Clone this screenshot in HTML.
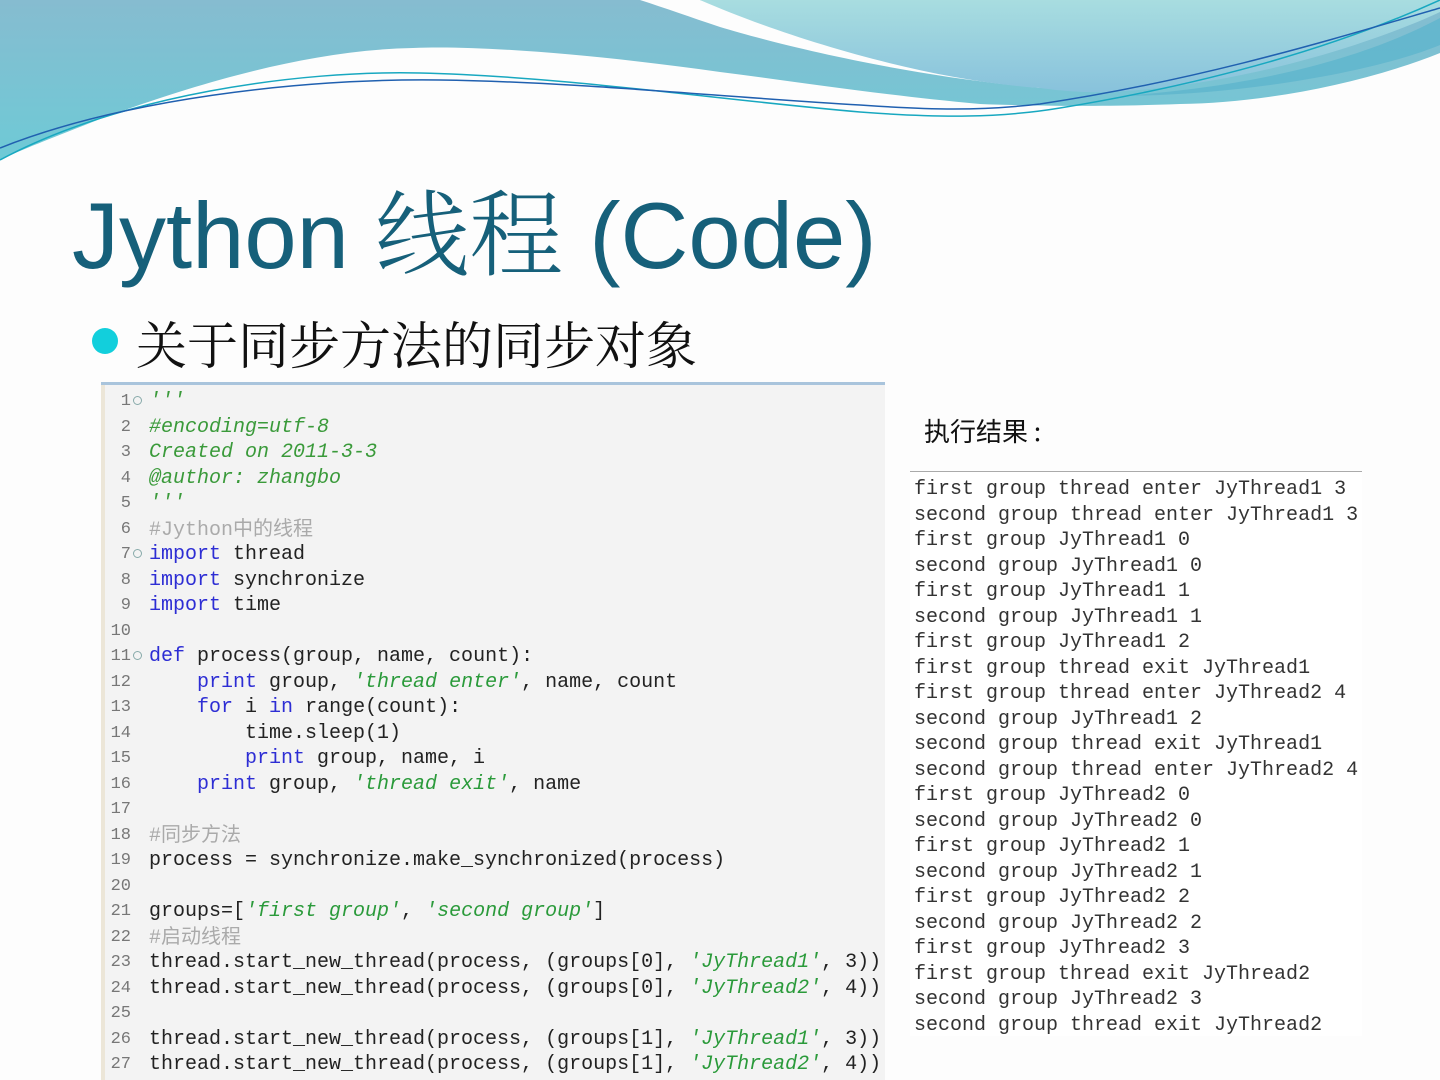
<!DOCTYPE html>
<html><head><meta charset="utf-8"><style>
html,body{margin:0;width:1440px;height:1080px;overflow:hidden}
body{background:#fdfdfd;position:relative;font-family:"Liberation Sans","Noto Sans CJK SC",sans-serif}
.abs{position:absolute}
#title{left:72px;top:168px;font-size:94px;color:#16607a;white-space:nowrap;line-height:120px}
#title .cj{font-family:"Noto Serif CJK SC","Noto Sans CJK SC",serif;font-weight:300}
#bul{left:92px;top:328px;width:26px;height:26px;border-radius:50%;background:#12cfdc}
#sub{left:136px;top:310px;font-size:51px;font-family:"Noto Serif CJK SC",serif;color:#111;line-height:64px;white-space:nowrap}
#code{left:101px;top:382px;width:784px;height:698px;background:#f3f3f3;border-top:3px solid #a9c4dc;box-sizing:border-box}
#gut{left:101px;top:385px;width:4px;height:695px;background:#ece6d8}
.ln{position:absolute;font-family:"Liberation Mono",monospace;font-size:20px;white-space:normal}
.ln div{height:25.5px;line-height:25.5px;overflow:visible;white-space:pre}
#nums{left:101px;top:389px;width:30px;text-align:right;color:#777;font-size:17px}
#src{left:149px;top:389px;color:#222}
.k{color:#2d2dd4}.s{color:#2a9a3a;font-style:italic}.c{color:#aaa}.g{color:#3a9a3a;font-style:italic}
.cjk{font-family:"Noto Sans CJK SC",sans-serif;font-size:20px;line-height:20px}
.fold{position:absolute;left:133px;width:9px;height:9px;border:1px solid #8aa;border-radius:50%;box-sizing:border-box}
#res{left:924px;top:412px;font-size:26px;font-family:"Noto Sans CJK SC",sans-serif;color:#111}
#out{left:910px;top:471px;width:452px;height:564px;background:#fff;border-top:1.5px solid #aaa}
#outt{left:914px;top:477px;color:#333}
</style></head><body>
<svg class="abs" style="left:0;top:0" width="1440" height="180" viewBox="0 0 1440 180">
<defs>
<linearGradient id="g1" x1="0" y1="0" x2="0" y2="1"><stop offset="0" stop-color="#86bcd0"/><stop offset="1" stop-color="#6ecad6"/></linearGradient>
<linearGradient id="g2" x1="0" y1="0" x2="0" y2="1"><stop offset="0" stop-color="#a8dde0"/><stop offset="1" stop-color="#88c2dc"/></linearGradient>
</defs>
<path d="M0 0 H1440 V53 C1360 85 1260 103 1180 104 C1100 107 1030 106 980 104 C880 95 800 82 720 72 C600 55 480 45 413 48 C300 50 180 90 105 117 C60 135 20 150 0 160 Z" fill="url(#g1)"/>
<path d="M640 0 H700 C760 20 900 60 1041 88 C900 75 780 45 720 27 C690 17 665 8 640 0 Z" fill="#fdfdfd"/>
<path d="M700 0 C780 35 920 80 1041 88 C1060 91 1090 93 1110 92 C1250 85 1380 40 1440 12 V0 Z" fill="url(#g2)"/>
<path d="M1440 18 C1380 50 1280 85 1120 96 C1250 95 1380 70 1440 45 Z" fill="#5cb4cc" opacity=".75"/>
<path d="M0 160 C120 95 300 70 420 73 C560 76 720 100 860 112 C940 118 1000 118 1060 108 C1200 85 1330 50 1440 0" fill="none" stroke="#18a8c0" stroke-width="1.5"/>
<path d="M0 148 C120 100 300 78 440 80 C580 82 720 97 860 105 C930 110 980 111 1040 104 C1200 80 1330 40 1440 8" fill="none" stroke="#2060b0" stroke-width="1.5"/>
</svg>
<div id="title" class="abs">Jython <span class="cj">线程</span> (Code)</div>
<div id="bul" class="abs"></div>
<div id="sub" class="abs">关于同步方法的同步对象</div>
<div id="code" class="abs"></div>
<div id="gut" class="abs"></div>
<div class="fold" style="top:396px"></div>
<div class="fold" style="top:549px"></div>
<div class="fold" style="top:651px"></div>
<div id="nums" class="ln"><div>1</div><div>2</div><div>3</div><div>4</div><div>5</div><div>6</div><div>7</div><div>8</div><div>9</div><div>10</div><div>11</div><div>12</div><div>13</div><div>14</div><div>15</div><div>16</div><div>17</div><div>18</div><div>19</div><div>20</div><div>21</div><div>22</div><div>23</div><div>24</div><div>25</div><div>26</div><div>27</div></div>
<div id="src" class="ln"><div><span class="g">'''</span></div><div><span class="g">#encoding=utf-8</span></div><div><span class="g">Created on 2011-3-3</span></div><div><span class="g">@author: zhangbo</span></div><div><span class="g">'''</span></div><div><span class="c">#Jython<span class="cjk">中的线程</span></span></div><div><span class="k">import</span> thread</div><div><span class="k">import</span> synchronize</div><div><span class="k">import</span> time</div><div></div><div><span class="k">def</span> process(group, name, count):</div><div>    <span class="k">print</span> group, <span class="s">'thread enter'</span>, name, count</div><div>    <span class="k">for</span> i <span class="k">in</span> range(count):</div><div>        time.sleep(1)</div><div>        <span class="k">print</span> group, name, i</div><div>    <span class="k">print</span> group, <span class="s">'thread exit'</span>, name</div><div></div><div><span class="c">#<span class="cjk">同步方法</span></span></div><div>process = synchronize.make_synchronized(process)</div><div></div><div>groups=[<span class="s">'first group'</span>, <span class="s">'second group'</span>]</div><div><span class="c">#<span class="cjk">启动线程</span></span></div><div>thread.start_new_thread(process, (groups[0], <span class="s">'JyThread1'</span>, 3))</div><div>thread.start_new_thread(process, (groups[0], <span class="s">'JyThread2'</span>, 4))</div><div></div><div>thread.start_new_thread(process, (groups[1], <span class="s">'JyThread1'</span>, 3))</div><div>thread.start_new_thread(process, (groups[1], <span class="s">'JyThread2'</span>, 4))</div></div>
<div id="res" class="abs">执行结果 :</div>
<div id="out" class="abs"></div>
<div id="outt" class="ln"><div>first group thread enter JyThread1 3</div><div>second group thread enter JyThread1 3</div><div>first group JyThread1 0</div><div>second group JyThread1 0</div><div>first group JyThread1 1</div><div>second group JyThread1 1</div><div>first group JyThread1 2</div><div>first group thread exit JyThread1</div><div>first group thread enter JyThread2 4</div><div>second group JyThread1 2</div><div>second group thread exit JyThread1</div><div>second group thread enter JyThread2 4</div><div>first group JyThread2 0</div><div>second group JyThread2 0</div><div>first group JyThread2 1</div><div>second group JyThread2 1</div><div>first group JyThread2 2</div><div>second group JyThread2 2</div><div>first group JyThread2 3</div><div>first group thread exit JyThread2</div><div>second group JyThread2 3</div><div>second group thread exit JyThread2</div></div>
</body></html>
